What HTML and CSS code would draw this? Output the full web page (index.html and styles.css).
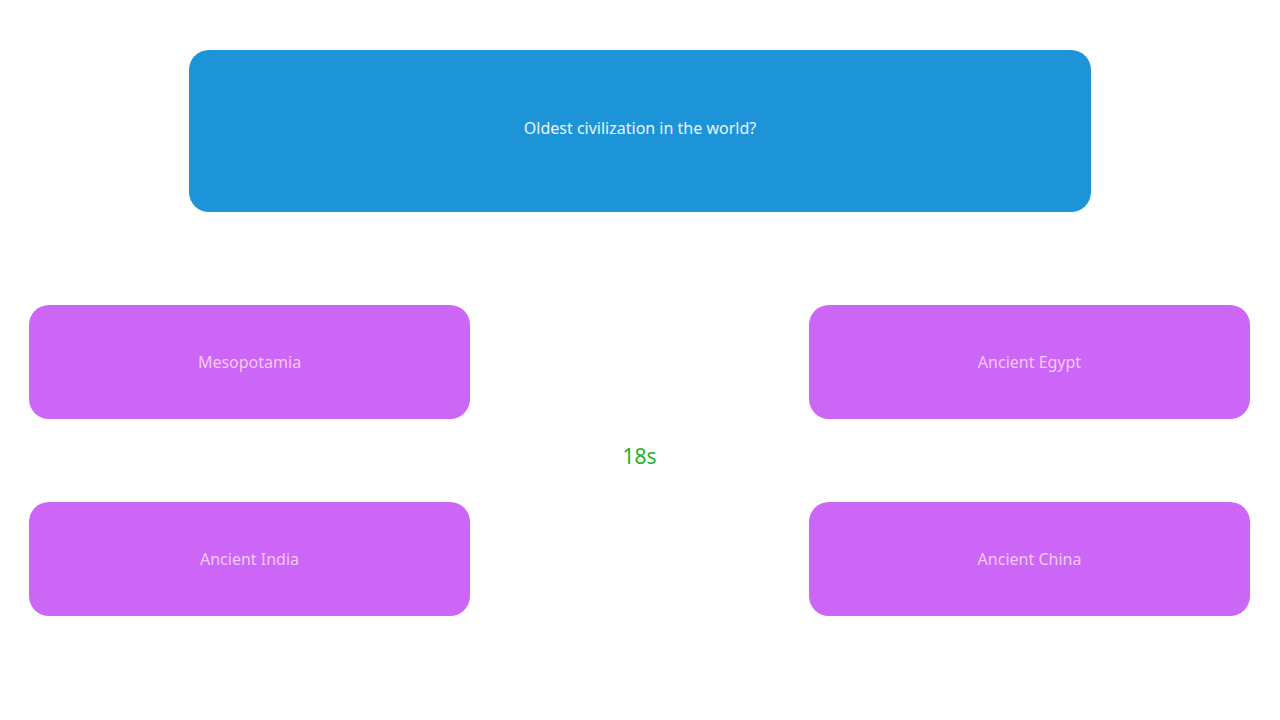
FILE: index.html
```html
<!DOCTYPE html>
<html lang="en">
<head>
  <meta charset="UTF-8" />
  <title>Quiz</title>
  <link rel="stylesheet" href="styles.css">
</head>
<body>
  <div class="quiz">
    <div class="question">Oldest civilization in the world?</div>

    <div class="answers">
      <button class="answer">Mesopotamia</button>
      <div class="spacer"></div>
      <button class="answer">Ancient Egypt</button>
      <div class="spacer"></div>
      <div class="timer">18s</div>
      <div class="spacer"></div>
      <button class="answer">Ancient India</button>
      <div class="spacer"></div>
      <button class="answer">Ancient China</button>
    </div>
  </div>
</body>
</html>
```

FILE: styles.css
```css
body {
  margin: 0;
  padding: 0;
  background: #fff;
  font-family: 'Noto Sans', 'DejaVu Sans', sans-serif;
}
.quiz {
  padding-top: 50px;
}
.question {
  width: 902px;
  height: 162px;
  margin: 0 auto;
  background: #1e94d8;
  border-radius: 20px;
  color: #eaf4fb;
  font-size: 16px;
  display: flex;
  align-items: center;
  justify-content: center;
  padding-bottom: 6px;
  box-sizing: border-box;
}
.answers {
  display: grid;
  grid-template-columns: 441px 1fr 441px;
  grid-template-rows: 114px 83px 114px;
  padding: 0 30px 0 29px;
  margin-top: 93px;
}
.answer {
  background: #cc66f7;
  border: none;
  border-radius: 20px;
  color: #f4c9fb;
  font-family: inherit;
  font-size: 16px;
  cursor: pointer;
}
.timer {
  display: flex;
  align-items: center;
  justify-content: center;
  color: #1fb31f;
  font-size: 21px;
  padding-bottom: 10px;
}
```
